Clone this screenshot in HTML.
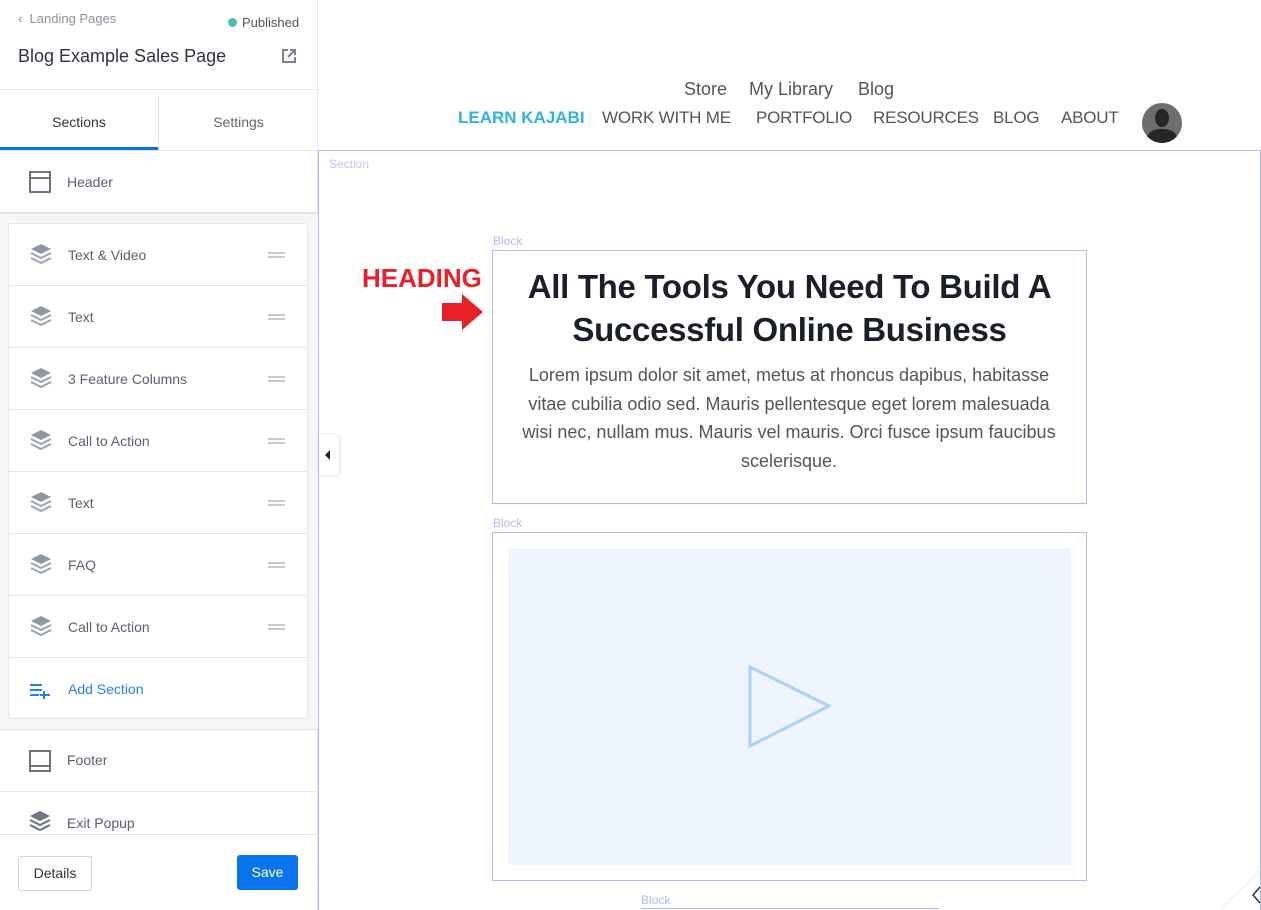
<!DOCTYPE html>
<html style="width:1261px;height:910px;overflow:hidden"><head><meta charset="utf-8"><style>
*{box-sizing:border-box;margin:0;padding:0}
body{width:1261px;height:910px;overflow:hidden;font-family:"Liberation Sans",sans-serif;background:#fff;position:relative}
.abs{position:absolute}
.side{left:0;top:0;width:318px;height:910px;background:#fff;border-right:1px solid #e3e6ea}
.row{position:absolute;left:0;width:300px;height:62px;border-bottom:1px solid #e3e6ea;font-size:14px;color:#5a6270}
.row span{position:absolute;left:59px;top:23px}
.ico{position:absolute;left:20px;top:19px}
.drag{position:absolute;right:24px;top:28px;width:17px;height:6px;border-top:2px solid #c5cbd3;border-bottom:2px solid #c5cbd3}
.nav{font-size:18px;color:#555;position:absolute;white-space:nowrap}
.n2{font-size:17px;top:108px;letter-spacing:-0.2px}
</style></head><body>
<div class="abs side">
 <div class="abs" style="left:18px;top:11px;font-size:13px;color:#8a929d">&#8249;&nbsp; Landing Pages</div>
 <div class="abs" style="left:228px;top:15px;font-size:13px;color:#555"><span style="display:inline-block;width:9px;height:9px;border-radius:50%;background:#4dc0b2;margin-right:5px"></span>Published</div>
 <div class="abs" style="left:18px;top:46px;font-size:18px;color:#2f3540">Blog Example Sales Page</div>
 <svg class="abs" style="left:281px;top:48px" width="16" height="16" viewBox="0 0 16 16"><path d="M7 2H2v12h12V9M9 2h5v5M14 2L7 9" fill="none" stroke="#7a828e" stroke-width="2"/></svg>
 <div class="abs" style="left:0;top:89px;width:318px;border-top:1px solid #e3e6ea"></div>
 <div class="abs" style="left:0;top:96px;width:158px;height:54px;text-align:center;line-height:52px;font-size:14px;color:#333;border-bottom:3px solid #0a6fe8">Sections</div>
 <div class="abs" style="left:158px;top:96px;width:160px;height:54px;text-align:center;line-height:52px;font-size:14px;color:#666;border-left:1px solid #e3e6ea">Settings</div>
 <div class="abs" style="left:0;top:150px;width:318px;border-top:1px solid #e3e6ea"></div>
 <div class="row" style="top:151px;width:318px"><svg class="ico" style="left:29px;top:20px" width="22" height="22"><rect x="1" y="1" width="20" height="20" fill="none" stroke="#6b7480" stroke-width="2"/><line x1="1" y1="7" x2="21" y2="7" stroke="#6b7480" stroke-width="2"/></svg><span style="left:67px;top:23px">Header</span></div>
 <div class="abs" style="left:0;top:213px;width:318px;height:517px;background:#f5f6f8;border-top:1px solid #e3e6ea;border-bottom:1px solid #e3e6ea"></div>
 <div class="abs" style="left:8px;top:223px;width:300px;height:496px;background:#fff;border:1px solid #e3e6ea;border-radius:3px">
  <div class="row" style="top:0"><svg class="ico" width="24" height="22" viewBox="0 0 24 22"><path d="M12 1L22 6 12 11 2 6Z" fill="#8e98a4"/><path d="M2 10l10 5 10-5M2 15l10 5 10-5" fill="none" stroke="#9aa3ae" stroke-width="2"/></svg><span>Text &amp; Video</span><div class="drag"></div></div>
  <div class="row" style="top:62px"><svg class="ico" width="24" height="22" viewBox="0 0 24 22"><path d="M12 1L22 6 12 11 2 6Z" fill="#8e98a4"/><path d="M2 10l10 5 10-5M2 15l10 5 10-5" fill="none" stroke="#9aa3ae" stroke-width="2"/></svg><span>Text</span><div class="drag"></div></div>
  <div class="row" style="top:124px"><svg class="ico" width="24" height="22" viewBox="0 0 24 22"><path d="M12 1L22 6 12 11 2 6Z" fill="#8e98a4"/><path d="M2 10l10 5 10-5M2 15l10 5 10-5" fill="none" stroke="#9aa3ae" stroke-width="2"/></svg><span>3 Feature Columns</span><div class="drag"></div></div>
  <div class="row" style="top:186px"><svg class="ico" width="24" height="22" viewBox="0 0 24 22"><path d="M12 1L22 6 12 11 2 6Z" fill="#8e98a4"/><path d="M2 10l10 5 10-5M2 15l10 5 10-5" fill="none" stroke="#9aa3ae" stroke-width="2"/></svg><span>Call to Action</span><div class="drag"></div></div>
  <div class="row" style="top:248px"><svg class="ico" width="24" height="22" viewBox="0 0 24 22"><path d="M12 1L22 6 12 11 2 6Z" fill="#8e98a4"/><path d="M2 10l10 5 10-5M2 15l10 5 10-5" fill="none" stroke="#9aa3ae" stroke-width="2"/></svg><span>Text</span><div class="drag"></div></div>
  <div class="row" style="top:310px"><svg class="ico" width="24" height="22" viewBox="0 0 24 22"><path d="M12 1L22 6 12 11 2 6Z" fill="#8e98a4"/><path d="M2 10l10 5 10-5M2 15l10 5 10-5" fill="none" stroke="#9aa3ae" stroke-width="2"/></svg><span>FAQ</span><div class="drag"></div></div>
  <div class="row" style="top:372px"><svg class="ico" width="24" height="22" viewBox="0 0 24 22"><path d="M12 1L22 6 12 11 2 6Z" fill="#8e98a4"/><path d="M2 10l10 5 10-5M2 15l10 5 10-5" fill="none" stroke="#9aa3ae" stroke-width="2"/></svg><span>Call to Action</span><div class="drag"></div></div>
  <div class="row" style="top:434px;border:none;color:#2a7ff0"><svg class="ico" style="top:25px" width="22" height="16"><path d="M1 2h12M1 7h12M1 12h9M15 8v8M11 12h10" stroke="#2a7ff0" stroke-width="2"/></svg><span>Add Section</span></div>
 </div>
 <div class="row" style="top:730px;width:318px"><svg class="ico" style="left:29px;top:20px" width="22" height="22"><rect x="1" y="1" width="20" height="20" fill="none" stroke="#6b7480" stroke-width="2"/><line x1="1" y1="16" x2="21" y2="16" stroke="#6b7480" stroke-width="2"/></svg><span style="left:67px;top:22px">Footer</span></div>
 <div class="row" style="top:792px;width:318px;height:42px;border:none;overflow:hidden"><svg class="ico" style="left:28px;top:18px" width="24" height="22" viewBox="0 0 24 22"><path d="M12 1L22 6 12 11 2 6Z" fill="#6b7480"/><path d="M2 10l10 5 10-5M2 15l10 5 10-5" fill="none" stroke="#6b7480" stroke-width="2"/></svg><span style="left:67px;top:23px">Exit Popup</span></div>
 <div class="abs" style="left:0;top:834px;width:318px;border-top:1px solid #e3e6ea"></div>
 <div class="abs" style="left:18px;top:856px;width:74px;height:35px;border:1px solid #cdd3da;border-radius:3px;text-align:center;line-height:33px;font-size:14px;color:#333">Details</div>
 <div class="abs" style="left:237px;top:855px;width:61px;height:35px;background:#0a74ee;border-radius:3px;text-align:center;line-height:35px;font-size:14px;color:#fff">Save</div>
</div>
<div class="abs" style="left:318px;top:435px;width:21px;height:40px;background:#fff;border-radius:0 4px 4px 0;box-shadow:1px 0 3px rgba(0,0,0,.15)"><div class="abs" style="left:7px;top:15px;border-right:5px solid #222;border-top:5px solid transparent;border-bottom:5px solid transparent"></div></div>
<div class="nav" style="left:684px;top:79px">Store</div>
<div class="nav" style="left:749px;top:79px">My Library</div>
<div class="nav" style="left:858px;top:79px">Blog</div>
<div class="nav n2" style="left:458px;color:#2fb3e0;font-weight:bold;font-size:17px;letter-spacing:0">LEARN KAJABI</div>
<div class="nav n2" style="left:602px">WORK WITH ME</div>
<div class="nav n2" style="left:756px">PORTFOLIO</div>
<div class="nav n2" style="left:873px">RESOURCES</div>
<div class="nav n2" style="left:993px">BLOG</div>
<div class="nav n2" style="left:1061px">ABOUT</div>
<svg class="abs" style="left:1142px;top:103px" width="40" height="40" viewBox="0 0 40 40"><clipPath id="c"><circle cx="20" cy="20" r="20"/></clipPath><circle cx="20" cy="20" r="20" fill="#6d6d6d"/><g clip-path="url(#c)" fill="#262626"><ellipse cx="20" cy="15" rx="7" ry="9"/><path d="M4 40c0-10 6-14 16-14s16 4 16 14z"/></g></svg>
<div class="abs" style="left:318px;top:150px;width:943px;height:780px;border:1px solid #b5b8f2"></div>
<div class="abs" style="left:329px;top:157px;font-size:12px;color:#c3c5f0">Section</div>
<div class="abs" style="left:493px;top:234px;font-size:12px;color:#b5b8f2">Block</div>
<div class="abs" style="left:492px;top:250px;width:595px;height:254px;border:1px solid #b5b8f2"></div>
<div class="abs" style="left:362px;top:263px;font-size:26px;font-weight:bold;color:#e8202a">HEADING</div>
<svg class="abs" style="left:442px;top:294px" width="42" height="36"><path d="M0 9h20V0l21 18-21 18V27H0z" fill="#e8202a"/></svg>
<div class="abs" style="left:492px;top:265px;width:595px;text-align:center;font-size:33px;font-weight:bold;color:#1b1f2a;line-height:43px;letter-spacing:-0.3px">All The Tools You Need To Build A<br>Successful Online Business</div>
<div class="abs" style="left:512px;top:361px;width:554px;text-align:center;font-size:18px;color:#555;line-height:28.5px">Lorem ipsum dolor sit amet, metus at rhoncus dapibus, habitasse vitae cubilia odio sed. Mauris pellentesque eget lorem malesuada wisi nec, nullam mus. Mauris vel mauris. Orci fusce ipsum faucibus scelerisque.</div>
<div class="abs" style="left:493px;top:516px;font-size:12px;color:#b5b8f2">Block</div>
<div class="abs" style="left:492px;top:532px;width:595px;height:349px;border:1px solid #b5b8f2"></div>
<div class="abs" style="left:508px;top:548px;width:563px;height:317px;background:#eef5fe;border-radius:3px"></div>
<svg class="abs" style="left:747px;top:665px" width="84" height="84"><path d="M3 2v79l79-40z" fill="none" stroke="#aed0f7" stroke-width="3"/></svg>
<div class="abs" style="left:641px;top:893px;font-size:12px;color:#b5b8f2">Block</div>
<div class="abs" style="left:641px;top:908px;width:298px;border-top:1px solid #b5b8f2"></div>
<svg class="abs" style="left:1220px;top:865px" width="41" height="45"><path d="M0 45L41 4" stroke="#eee" stroke-width="1"/><path d="M40 22l-7 8 7 8" fill="none" stroke="#333" stroke-width="1.5"/></svg>
</body></html>
